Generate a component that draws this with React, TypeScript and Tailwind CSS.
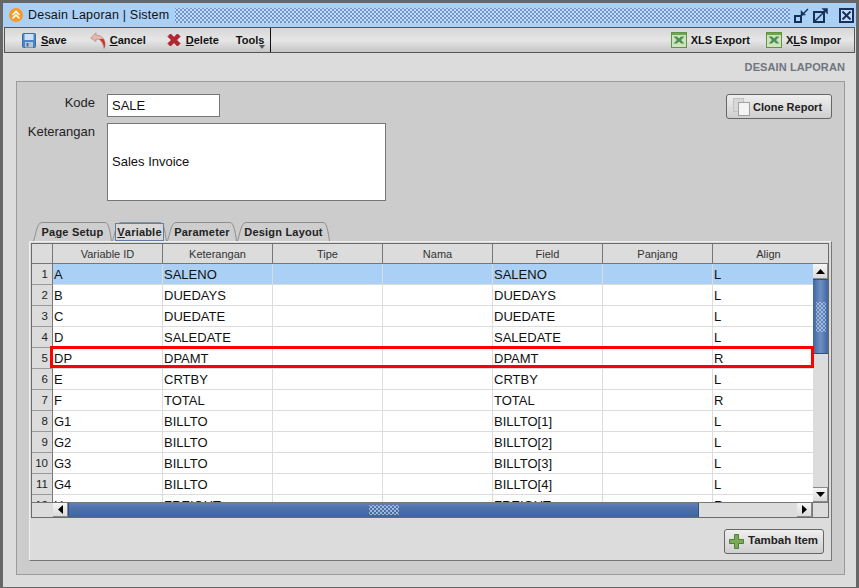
import React from 'react';

const columns = ['Variable ID', 'Keterangan', 'Tipe', 'Nama', 'Field', 'Panjang', 'Align'];

const rows = [
  ['A', 'SALENO', 'SALENO', 'L'],
  ['B', 'DUEDAYS', 'DUEDAYS', 'L'],
  ['C', 'DUEDATE', 'DUEDATE', 'L'],
  ['D', 'SALEDATE', 'SALEDATE', 'L'],
  ['DP', 'DPAMT', 'DPAMT', 'R'],
  ['E', 'CRTBY', 'CRTBY', 'L'],
  ['F', 'TOTAL', 'TOTAL', 'R'],
  ['G1', 'BILLTO', 'BILLTO[1]', 'L'],
  ['G2', 'BILLTO', 'BILLTO[2]', 'L'],
  ['G3', 'BILLTO', 'BILLTO[3]', 'L'],
  ['G4', 'BILLTO', 'BILLTO[4]', 'L'],
  ['H', 'FREIGHT', 'FREIGHT', 'R'],
];

const dots =
  'bg-[#c6dcf6] bg-[radial-gradient(#6d97d0_0.8px,transparent_0.9px),radial-gradient(#6d97d0_0.8px,transparent_0.9px)] bg-[length:4px_4px] bg-[position:0_0,2px_2px]';
const thumbDots =
  'bg-[radial-gradient(#9fb9dc_0.8px,transparent_0.9px),radial-gradient(#9fb9dc_0.8px,transparent_0.9px)] bg-[length:4px_4px] bg-[position:0_0,2px_2px]';

const Xls = () => (
  <svg width="16" height="16" viewBox="0 0 16 16" className="shrink-0">
    <rect x="0.500" y="0.500" width="15" height="15" fill="#cfe3c0" stroke="#5f9440" />
    <rect x="1" y="1" width="14" height="2" fill="#6fa64e" />
    <path d="M2.500 4.500h3.500L8 6.500l2-2h3.500L10 8l3.500 3.500H10l-2-2-2 2H2.500L6 8z" fill="#4d9152" />
  </svg>
);

const Save = () => (
  <svg width="14" height="15" viewBox="0 0 14 15" className="shrink-0">
    <rect x="0.500" y="0.500" width="13" height="14" rx="1" fill="#4b86c8" stroke="#3a6ca8" />
    <rect x="2.500" y="1" width="9" height="6" fill="#cfe0f2" />
    <rect x="3" y="9" width="8" height="5.500" fill="#b9c4d0" />
    <rect x="4.500" y="10" width="2" height="3.500" fill="#4b6f9c" />
  </svg>
);

const Cancel = () => (
  <svg width="17" height="17" viewBox="0 0 17 17" className="shrink-0">
    <path d="M6 0.800 0.600 6 6 9.600V7c3.500 0 6.500 2 8 9.500 2-3 2.500-12.500-8-13.500z" fill="#f0b4aa" stroke="#9a9088" strokeWidth="0.700" />
    <path d="M9 7.200c2.600 1.400 4.500 4 5.300 8.800 1.200-2.600 1.200-6-1-9.200z" fill="#d2322c" />
  </svg>
);

const Delete = () => (
  <svg width="14" height="14" viewBox="0 0 14 14" className="shrink-0">
    <path d="M1 3.500 3.500 1 7 4.500 10.500 1 13 3.500 9.500 7 13 10.500 10.500 13 7 9.500 3.500 13 1 10.500 4.500 7z" fill="#b4252f" stroke="#a01c26" strokeWidth="1" />
  </svg>
);

const Restore = () => (
  <svg width="15" height="15" viewBox="0 0 15 15" fill="none" stroke="#16305e">
    <rect x="1" y="8" width="6" height="6" strokeWidth="2" />
    <path d="M7.500 7.500 14 1" strokeWidth="1.500" />
    <path d="M7 7V2.500L11.500 7z" fill="#16305e" strokeWidth="0.500" />
  </svg>
);

const Maximize = () => (
  <svg width="15" height="15" viewBox="0 0 15 15" fill="none" stroke="#16305e">
    <rect x="1" y="4" width="10" height="10" strokeWidth="2" />
    <path d="M2 13 13.500 1.500" strokeWidth="1.500" />
    <path d="M14.500 0.500V6L9 0.500z" fill="#16305e" strokeWidth="0.500" />
  </svg>
);

const Close = () => (
  <div className="flex h-[15px] w-[15px] items-center justify-center border-2 border-[#16305e] bg-[#c6dcf6]">
    <svg width="9" height="9" viewBox="0 0 9 9" stroke="#16305e" strokeWidth="2">
      <path d="M0.500 0.500l8 8M8.500 0.500l-8 8" />
    </svg>
  </div>
);

const ToolButton = ({ icon, label, u, gap, className }: { icon: React.ReactNode; label: string; u?: number; gap: string; className?: string }) => (
  <div className={`flex items-center text-[11px] font-bold text-[#111] ${gap} ${className ?? ''}`}>
    {icon}
    <span>
      {u === undefined ? label : (
        <>
          {label.slice(0, u)}
          <span className="underline">{label[u]}</span>
          {label.slice(u + 1)}
        </>
      )}
    </span>
  </div>
);

const Tab = ({ label, width, u, active }: { label: string; width: number; u?: number; active?: boolean }) => (
  <div className={`relative flex h-[19px] shrink-0 items-center justify-center text-[11px] font-bold tracking-[0.2px] text-[#222] ${active ? '' : 'pt-[2px]'}`} style={{ width }}>
    <svg width={width} height="19" viewBox={`0 0 ${width} 19`} fill="#cecece" stroke="#8f8f8f" className="absolute left-0 top-0">
      <path d={`M0.500 19C3 12 4 0.500 9 0.500H${width - 7}C${width - 3} 0.500 ${width - 2} 10 ${width - 0.5} 19`} />
    </svg>
    <span className={`relative ${active ? 'flex h-[18px] w-[49px] items-center justify-center border border-[#5f7fa8] bg-[#d8d8d8] pt-[1px]' : ''}`}>
      {u === undefined ? label : (
        <>
          {label.slice(0, u)}
          <span className="underline">{label[u]}</span>
          {label.slice(u + 1)}
        </>
      )}
    </span>
  </div>
);

const ArrowButton = ({ d, className }: { d: string; className: string }) => (
  <div className={`flex shrink-0 items-center justify-center border-r border-b border-[#8a8a8a] bg-gradient-to-b from-[#f6f6f6] to-[#dadada] ${className}`}>
    <svg width="9" height="9" viewBox="0 0 9 9">
      <path d={d} fill="#000" />
    </svg>
  </div>
);

const Cell = ({ text }: { text?: string }) => (
  <div className="flex w-[110px] shrink-0 items-center border-r border-[#dcdcdc] pl-[1px] pt-[1px]">{text}</div>
);

const Grid = () => (
  <div className="relative flex h-[275px] w-[798px] shrink-0 flex-col border border-[#6a6a6a] bg-[#dcdcdc]">
    {/* header */}
    <div className="flex h-[20px] shrink-0 border-b border-[#777]">
      <div className="w-[21px] shrink-0 border-r border-[#777]" />
      {columns.map(c => (
        <div key={c} className="flex w-[110px] shrink-0 items-center justify-center border-r border-[#777] pt-[1px] text-[11px] text-[#333] last:w-[115px] last:border-r-0 last:pr-[4px]">
          {c}
        </div>
      ))}
    </div>
    <div className="flex min-h-0 flex-1">
      <div className="flex min-w-0 flex-1 flex-col overflow-hidden">
        {rows.map((r, i) => (
          <div key={i} className={`flex h-[21px] shrink-0 border-b border-[#dcdcdc] text-[13px] text-[#111] ${i === 0 ? 'bg-[#abd0f5]' : 'bg-white'}`}>
            <div className="-mb-[1px] flex w-[21px] shrink-0 items-center justify-end border-r border-b border-r-[#777] border-b-[#9a9a9a] bg-[#dcdcdc] pr-[4px] pt-[1px] text-[11.5px] text-[#222]">
              {i + 1}
            </div>
            <Cell text={r[0]} />
            <Cell text={r[1]} />
            <Cell />
            <Cell />
            <Cell text={r[2]} />
            <Cell />
            <div className="flex w-[100px] shrink-0 items-center pl-[1px] pt-[1px]">{r[3]}</div>
          </div>
        ))}
      </div>
      {/* vertical scrollbar */}
      <div className="flex w-[15px] shrink-0 flex-col bg-[#dcdcdc]">
        <ArrowButton d="M4.500 2 9 7H0z" className="h-[15px]" />
        <div className="flex h-[75px] shrink-0 items-center justify-center border-y border-[#2d4f8c] bg-gradient-to-r from-[#3f669f] via-[#6f8fc4] to-[#3f669f]">
          <div className={`h-[30px] w-[10px] ${thumbDots}`} />
        </div>
        <div className="flex-1" />
        <ArrowButton d="M0 2h9L4.500 7z" className="h-[15px] border-t border-t-[#8a8a8a]" />
      </div>
    </div>
    {/* horizontal scrollbar */}
    <div className="flex h-[15px] shrink-0 border-t border-[#777] bg-[#dcdcdc]">
      <div className="w-[21px] shrink-0" />
      <ArrowButton d="M2 4.500 7 0v9z" className="w-[15px]" />
      <div className="flex w-[631px] shrink-0 items-center justify-center border-x border-[#2d4f8c] bg-gradient-to-b from-[#5f80b8] via-[#4a6ea8] to-[#3f669f]">
        <div className={`h-[10px] w-[30px] ${thumbDots}`} />
      </div>
      <div className="flex-1" />
      <ArrowButton d="M2 0l5 4.500L2 9z" className="w-[15px]" />
      <div className="w-[16px] shrink-0 border-l border-[#777]" />
    </div>
    {/* highlight */}
    <div className="absolute left-[18px] top-[102px] h-[22px] w-[764px] border-[3px] border-[#ff0000]" />
  </div>
);

export default function App() {
  return (
    <div className="flex h-[588px] w-[859px] flex-col overflow-hidden border-x-[3px] border-t-[3px] border-b border-[#666] bg-[#dcdcdc] font-['Liberation_Sans',sans-serif]">
      {/* title bar */}
      <div className="flex h-[24px] shrink-0 items-center bg-[#abd0f5] pl-[6px]">
        <svg width="14" height="14" viewBox="0 0 14 14" className="shrink-0">
          <circle cx="7" cy="7" r="7" fill="#f59a23" />
          <path d="M3.500 7 7 3.500 10.500 7M3.500 10.500 7 7l3.500 3.500" stroke="#fff" strokeWidth="1.600" fill="none" />
        </svg>
        <span className="ml-[5px] w-[144px] shrink-0 text-[12.5px] tracking-[0.2px] text-[#111]">Desain Laporan | Sistem</span>
        <div className={`ml-[3px] h-[15px] w-[615px] shrink-0 ${dots}`} />
        <div className="ml-[4px] flex items-center gap-[4px]">
          <Restore />
          <Maximize />
          <div className="ml-[7px]">
            <Close />
          </div>
        </div>
      </div>
      {/* toolbar */}
      <div className="mx-[1px] flex h-[26px] shrink-0 items-center border border-[#555] bg-gradient-to-b from-[#d6d6d6] via-[#e6e6e6] to-[#c6c6c6] pl-[17px] pr-[13px] text-[#111]">
        <ToolButton icon={<Save />} label="Save" u={0} gap="gap-[5px]" />
        <ToolButton icon={<Cancel />} label="Cancel" u={0} gap="gap-[3px]" className="ml-[23px]" />
        <ToolButton icon={<Delete />} label="Delete" u={0} gap="gap-[5px]" className="ml-[21px]" />
        <div className="relative ml-[17px] text-[11px] font-bold">
          Tools
          <svg width="6" height="4" viewBox="0 0 6 4" className="absolute -right-[1px] bottom-[-1px]">
            <path d="M0 0h6L3 4z" fill="#555" />
          </svg>
        </div>
        <div className="ml-[6px] h-full w-[1px] bg-[#111]" />
        <div className="flex-1" />
        <ToolButton icon={<Xls />} label="XLS Export" gap="gap-[4px]" />
        <ToolButton icon={<Xls />} label="XLS Impor" u={1} gap="gap-[4px]" className="ml-[16px]" />
      </div>
      {/* body */}
      <div className="flex min-h-0 flex-1 flex-col pl-[13px] pr-[11px]">
        <div className="flex h-[28px] shrink-0 items-center justify-end pt-[1px] text-[11px] font-bold tracking-[0.1px] text-[#6e7680]">DESAIN LAPORAN</div>
        <div className="flex h-[494px] shrink-0 flex-col border border-[#9a9a9a] bg-[#cccccc] pl-[12px] pr-[12px]">
          <div className="flex shrink-0 pt-[12px]">
            <div className="flex w-[66px] shrink-0 flex-col items-end pt-[1px] text-[13px] text-[#222]">
              <div className="leading-[16px]">Kode</div>
              <div className="mt-[13px] leading-[16px]">Keterangan</div>
            </div>
            <div className="ml-[12px] flex flex-col gap-[6px]">
              <div className="flex h-[23px] w-[113px] items-center border border-[#777] bg-white pl-[4px] text-[13px] text-[#111]">SALE</div>
              <div className="flex h-[78px] w-[279px] items-center border border-[#777] bg-white pl-[4px] text-[13px] text-[#111]">Sales Invoice</div>
            </div>
            <div className="flex-1" />
            <div className="flex h-[25px] w-[106px] items-center gap-[3px] rounded-[3px] border border-[#666] bg-gradient-to-b from-[#efefef] to-[#cfcfcf] pl-[6px] pt-[1px] text-[11px] font-bold text-[#222]">
              <svg width="17" height="18" viewBox="0 0 17 18">
                <rect x="0.500" y="0.500" width="10" height="13" fill="#d8d8d8" stroke="#c2c2c2" />
                <rect x="5.500" y="4.500" width="11" height="13" fill="#f4f4f4" stroke="#a0a0a0" />
              </svg>
              Clone Report
            </div>
          </div>
          <div className="mt-[21px] flex h-[19px] shrink-0 items-end pl-[4px]">
            <Tab label="Page Setup" width={79} u={2} />
            <Tab label="Variable" width={55} u={0} active />
            <Tab label="Parameter" width={70} />
            <Tab label="Design Layout" width={93} />
          </div>
          <div className="flex h-[320px] shrink-0 flex-col border border-[#eeeeee] border-r-[#777] border-b-[#777] bg-[#dcdcdc] pl-[1px] pt-[1px]">
            <Grid />
            <div className="flex flex-1 items-center justify-end pr-[7px] pt-[4px]">
              <div className="flex h-[25px] w-[100px] items-center gap-[4px] rounded-[3px] border border-[#666] bg-gradient-to-b from-[#efefef] to-[#cfcfcf] pl-[4px] text-[11.5px] font-bold text-[#222]">
                <svg width="15" height="15" viewBox="0 0 15 15" className="shrink-0">
                  <path d="M5.500 0.500h4v5h5v4h-5v5h-4v-5h-5v-4h5z" fill="#79aa55" stroke="#55803a" />
                </svg>
                Tambah Item
              </div>
            </div>
          </div>
        </div>
      </div>
    </div>
  );
}
